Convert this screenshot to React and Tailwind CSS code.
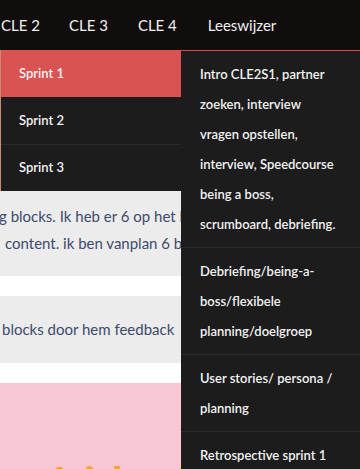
import React from "react";

const sprints = ["Sprint 1", "Sprint 2", "Sprint 3"];

const lessons = [
  "Intro CLE2S1, partner zoeken, interview vragen opstellen, interview, Speedcourse being a boss, scrumboard, debriefing.",
  "Debriefing/being-a-boss/flexibele planning/doelgroep",
  "User stories/ persona / planning",
  "Retrospective sprint 1",
];

export default function App() {
  return (
    <div className="relative w-[360px] h-[469px] overflow-hidden bg-white font-['Lato',sans-serif]">
      {/* NAV */}
      <nav className="h-[50px] bg-[#110d0d] flex items-center gap-[29px] pl-px text-[15px] text-[#f2f2f2]">
        <span>CLE 2</span>
        <span>CLE 3</span>
        <span className="ml-px">CLE 4</span>
        <span className="ml-[2px]">Leeswijzer</span>
      </nav>

      {/* PAGE CONTENT */}
      <div className="flex flex-col text-[15px] text-[#3d4a6b]">
        <div className="h-[141px] bg-[#c98a6e]" />
        <div className="h-[85px] bg-[#ececec] pt-[12px] leading-[27px] whitespace-nowrap overflow-hidden">
          <p className="-ml-px">g blocks. Ik heb er 6 op het l</p>
          <p className="ml-[5px]">content. ik ben vanplan 6 b</p>
        </div>
        <div className="h-[20px] bg-white" />
        <div className="h-[67px] bg-[#ececec] flex items-center whitespace-nowrap overflow-hidden">
          <p className="ml-[2px]">blocks door hem feedback</p>
        </div>
        <div className="h-[20px] bg-white" />
        <div className="h-[86px] bg-[#f9c6d3] overflow-hidden">
          <h2 className="mt-[77px] ml-[44px] text-[48px] leading-none text-[#f4a340] font-bold">1 ideeën</h2>
        </div>
      </div>

      {/* DROPDOWN: SPRINTS */}
      <ul className="absolute left-px top-[50px] w-[180px] bg-[#1c1c1c] text-[13px] font-semibold text-[#f2f2f2]">
        {sprints.map((s, i) => (
          <li
            key={s}
            className={`h-[47px] flex items-center pl-[18px] ${
              i === 0 ? "bg-[#d95353]" : ""
            } ${i === 2 ? "border-t border-[#2c2c2c]" : ""}`}
          >
            {s}
          </li>
        ))}
      </ul>

      {/* DROPDOWN: LESSONS */}
      <ul className="absolute left-[181px] top-[50px] w-[179px] h-[419px] bg-[#1c1c1c] border-t border-[#d94a4a] text-[13px] font-semibold text-[#f2f2f2] leading-[30px]">
        {lessons.map((l, i) => (
          <li
            key={l}
            className={`pl-[19px] pr-[18px] py-[8px] ${
              i > 0 ? "border-t border-[#2c2c2c]" : ""
            }`}
          >
            {l}
          </li>
        ))}
      </ul>
    </div>
  );
}
